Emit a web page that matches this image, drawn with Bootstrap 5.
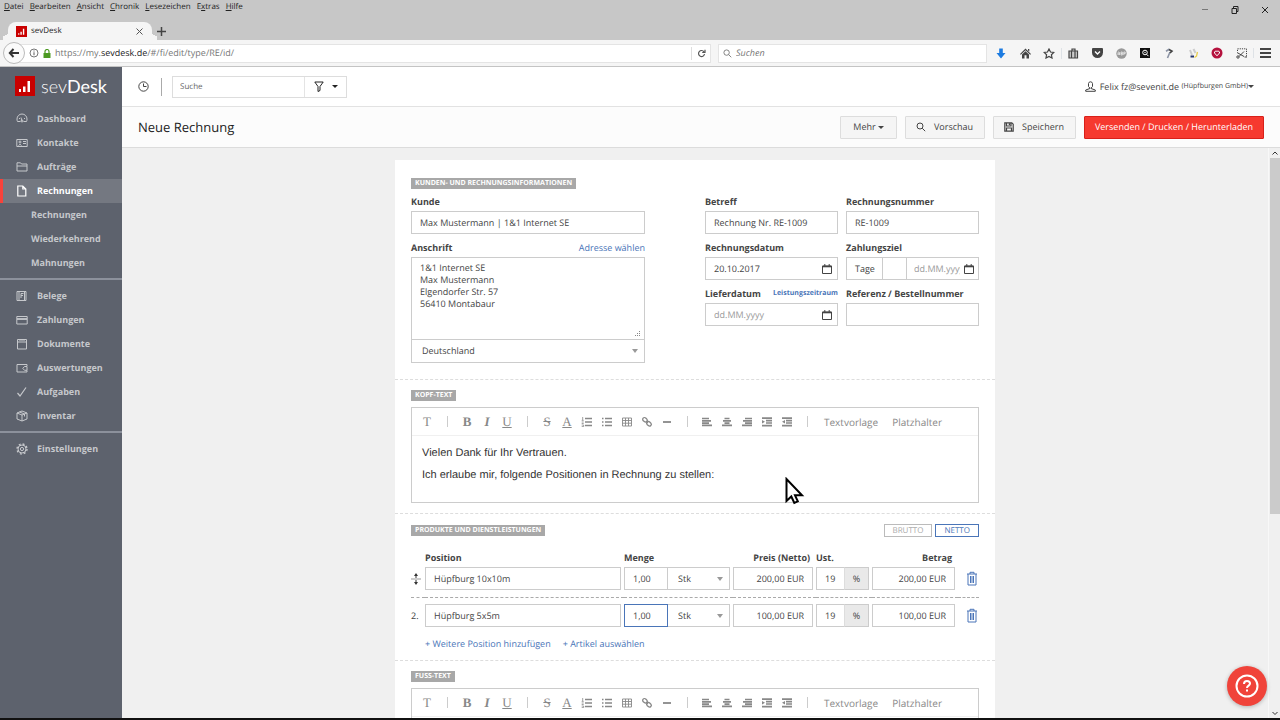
<!DOCTYPE html>
<html lang="de">
<head>
<meta charset="utf-8">
<meta name="viewport" content="width=device-width, initial-scale=1">
<title>sevDesk</title>
<link rel="stylesheet" href="https://cdn.jsdelivr.net/npm/bootstrap@5.3.0/dist/css/bootstrap.min.css">
<style>
  body { font-family: "Open Sans", sans-serif; font-size: 9px; line-height: 12px; color: #444; background: #c7c7c7; text-rendering: geometricPrecision; }
  svg { display: block; flex: none; fill: none; stroke: currentColor; }
  button, input, select, textarea { font: inherit; color: inherit; text-rendering: inherit; }
  a { text-decoration: none; color: #4a75b8; }
  .plain { border: 0; background: none; padding: 0; }

  /* browser window */
  .menubar { height: 14px; gap: 6px; padding-left: 4px; color: #222; font-size: 8px; }
  .menubar a { color: inherit; }
  .menubar u { text-underline-offset: 1px; }
  .wincontrols { gap: 22px; padding-right: 11px; color: #222; }
  .tabrow { height: 26px; padding: 8px 0 0 8px; }
  .tabshape { width: 144px; height: 18px; background: #f5f5f5; border-radius: 8px 8px 0 0; padding: 0 9px 0 8px; color: #222; font-size: 8px; }
  .tabshape::before, .tabshape::after { content: ""; position: absolute; bottom: 0; width: 6px; height: 10px; background: radial-gradient(circle at 0 0, transparent 6px, #f5f5f5 6px); }
  .tabshape::before { left: -5px; }
  .tabshape::after { right: -5px; transform: scaleX(-1); }
  .navrow { height: 27px; background: #f5f5f5; border-bottom: 1px solid #c4c4c4; padding: 0 3px; }
  .backbtn { width: 22px; height: 22px; border: 1px solid #bbb; border-radius: 50%; background: #fafafa; color: #333; z-index: 1; }
  .addressbar { height: 19px; background: #fff; border: 1px solid #e4e4e4; margin-left: -8px; padding-left: 11px; color: #777; }
  .addressbar b { font-weight: 400; color: #222; }
  .reload { width: 19px; height: 13px; border-left: 1px solid #ddd; color: #555; }
  .findbar { width: 269px; height: 19px; background: #fff; border: 1px solid #e4e4e4; margin-left: 7px; padding-left: 4px; color: #777; }
  .findbar input::placeholder { font-style: italic; color: #777; }
  .addons { margin-left: 2px; color: #444; }
  .addons button { width: 24px; }

  /* application */
  .app { background: #f0f0f0; border-bottom: 2px solid #111; min-height: 0; }
  .side { width: 122px; flex: none; background: #5d626d; color: #c6c8cc; font-weight: 700; }
  .logo { height: 40px; padding: 0 0 2px 15px; gap: 6px; color: #fff; font-family: Lato, sans-serif; font-size: 18px; line-height: 18px; font-weight: 300; }
  .logo b { font-weight: 400; }
  .side a { color: inherit; height: 24px; gap: 9px; padding-left: 16px; }
  .side .sub { padding-left: 31px; }
  .side .current { background: #747881; color: #fff; border-left: 3px solid #f8423a; padding-left: 13px; }
  .side hr { margin: 3px 0 4px; border: 0; border-top: 2px solid #8c919c; opacity: 1; }
  .topbar { height: 40px; flex: none; background: #fff; border-bottom: 1px solid #e2e2e2; padding: 0 26px 0 16px; }
  .split { width: 1px; height: 18px; background: #aaa; margin: 0 10px 0 12px; }
  .searchbox { height: 22px; border: 1px solid #ddd; }
  .searchbox input { width: 132px; padding-left: 7px; border-right: 1px solid #e4e4e4; outline: 0; font-size: 8px; }
  .searchbox input::placeholder { color: #666; }
  .searchbox button { width: 41px; color: #222; }
  .company { font-size: 7px; }
  .caret { width: 0; height: 0; border: 3px solid transparent; border-top-color: currentColor; border-bottom: 0; }
  .titlebar { height: 41px; flex: none; background: #fcfcfc; border-bottom: 1px solid #dcdcdc; padding: 0 16px; gap: 8px; }
  .titlebar h1 { font-size: 13px; line-height: 18px; font-weight: 400; color: #222; }
  .act { height: 23px; border: 1px solid #ddd; border-radius: 1px; background: #f5f5f5; padding: 0 11px 0 10px; }
  .act.more-menu { padding: 0 12px; }
  .act.send { background: #f6392f; border-color: #d8201a; color: #fff; padding: 0 10px; }
  .desk { min-height: 0; padding-top: 12px; }
  .rail { width: 12px; flex: none; color: #333; border-left: 1px solid #f8f8f8; }
  .thumb { width: 10px; height: 356px; background: #cbcbcb; }
  .help { right: 13px; bottom: 12px; width: 40px; height: 40px; border-radius: 50%; background: #f0433a; color: #fff; box-shadow: 0 1px 4px #0004; }

  /* invoice form */
  .paper { width: 600px; background: #fff; padding-top: 17px; }
  .block { padding: 0 16px 10px; border-bottom: 1px dashed #ddd; margin-bottom: 10px; }
  .block.customer { padding-bottom: 16px; }
  .tag { width: fit-content; background: #a8a8a8; color: #fff; font-size: 7px; line-height: 11px; font-weight: 700; padding: 0 4px; margin: 1px 0 6px; }
  .fields { display: grid; grid-template-columns: 234px 274px; justify-content: space-between; }
  .pair { display: grid; grid-template-columns: 133px 133px; gap: 8px; }
  label, th { font-weight: 700; color: #444; }
  .cap { height: 14px; margin-bottom: 2px; align-items: center; }
  .second { margin-top: 7px; }
  .box { height: 23px; border: 1px solid #ccc; border-radius: 0; background: #fff; padding: 0 8px; display: flex; align-items: center; width: 100%; min-width: 0; outline: 0; }
  .box input { min-width: 0; flex: 1; outline: 0; }
  .box.dated { padding-right: 5px; }
  .box.picker { padding: 0 6px 0 10px; }
  .picker::after { content: ""; border: 3px solid transparent; border-top: 4px solid #999; border-bottom: 0; flex: none; }
  .pick { appearance: none; width: 100%; height: 100%; border: 0; background: none; outline: 0; }
  input::placeholder { color: #999; opacity: 1; }
  .addr { height: 83px; border: 1px solid #ccc; padding: 4px 8px; line-height: 12px; width: 100%; display: block; outline: 0; color: #444; resize: none; overflow: hidden; }
  .period { font-size: 7px; }
  .term { flex: none; width: 35px; padding-left: 8px; }
  .box input.days { flex: none; width: 25px; border-left: 1px solid #ccc; border-right: 1px solid #ccc; }
  .due { padding-left: 7px; }
  .editor { border: 1px solid #ccc; }
  .tools { height: 28px; padding-left: 5px; border-bottom: 1px solid #f0f0f0; color: #888; font-size: 10px; }
  .tools button { width: 20px; height: 20px; }
  .tools i.bar { width: 20px; height: 11px; background: linear-gradient(#ccc, #ccc) center / 1px 100% no-repeat; }
  .tools button.word { width: auto; margin: 0 7px; }
  .glyph { font-family: "Liberation Serif", serif; font-size: 13px; font-weight: 700; line-height: 14px; }
  .copy { font-family: "Liberation Sans", sans-serif; font-size: 11px; line-height: 14px; color: #333; padding: 10px 10px 0; height: 66px; }
  .copy p { margin-bottom: 8px; }
  .pointer { left: 373px; top: 69px; }
  .vats { gap: 3px; }
  .vat { height: 13px; border: 1px solid #bbb; color: #aaa; font-size: 8px; line-height: 11px; padding: 0 8px; background: #fff; }
  .vat.on { border-color: #4a75b8; color: #4a75b8; }
  .lines { table-layout: fixed; width: 100%; border-collapse: collapse; margin-top: 10px; }
  .lines th { padding: 0 3px 3px 0; }
  .lines th.text-end { padding-right: 6px; }
  .lines td { padding: 0 3px 7px 0; }
  .lines td:last-child { padding-right: 1px; }
  .lines tr.next td { padding-top: 6px; }
  .lines tr.next { border-top: 1px dashed #aaa; }
  .lines .qty { width: 44px; flex: none; }
  .lines .active-box { border-color: #4a75b8; }
  .pct { width: 25px; height: 23px; background: #e9e9e9; border: 1px solid #ccc; border-left-color: #ddd; display: grid; place-items: center; flex: none; margin-left: -1px; }
  .bin { color: #4a75b8; }
  .more { margin: 4px 0 0 14px; gap: 12px; }
</style>
<script src="https://cdn.jsdelivr.net/npm/bootstrap@5.3.0/dist/js/bootstrap.bundle.min.js"></script>
</head>
<body class="vh-100 overflow-hidden d-flex flex-column">

<svg width="0" height="0" class="position-absolute">
  <symbol id="brand" viewBox="0 0 20 20"><path fill="#c90000" stroke="none" d="M0 0h20v20H0z"/><path fill="#fff" stroke="none" d="M4 13h2v3H4zM8 10.500h2.500V16H8zM12.500 5H15v11h-2.500z"/></symbol>
  <symbol id="lens" viewBox="0 0 10 10"><circle cx="4" cy="4" r="3"/><path d="M6.200 6.200 9.200 9.200"/></symbol>
  <symbol id="cal" viewBox="0 0 10 10"><path d="M.5 2h9v7.500h-9z"/><path stroke-width="1.600" d="M.5 2.500h9"/><path d="M2.800 0v2M7.200 0v2"/></symbol>
  <symbol id="bin" viewBox="0 0 12 14"><path d="M1 2.500h10M4 2.500V.8h4v1.700M2 2.500v11h8v-11M4.500 4.500v7M6 4.500v7M7.500 4.500v7"/></symbol>
  <symbol id="ol" viewBox="0 0 12 10"><path stroke-width="1.500" d="M4 1.500h7M4 5h7M4 8.500h7"/><path stroke-width=".8" d="M1.700 0v3M.7 3.400h2M.7 5h2M.7 6.500h2M.7 8h2v1.600h-2"/></symbol>
  <symbol id="ul" viewBox="0 0 12 10"><path stroke-width="1.500" d="M4 1.500h7M4 5h7M4 8.500h7M1 1.500h1.500M1 5h1.500M1 8.500h1.500"/></symbol>
  <symbol id="grid" viewBox="0 0 12 10"><path stroke-width=".9" d="M1.500 1h9v8h-9zM1.500 3.500h9M1.500 6.200h9M4.500 1v8M7.500 1v8"/></symbol>
  <symbol id="chain" viewBox="0 0 12 12"><g stroke-width="1.300"><rect x="1.500" y="2" width="5" height="3.600" rx="1.800" transform="rotate(42 4 3.800)"/><rect x="5.500" y="6" width="5" height="3.600" rx="1.800" transform="rotate(42 8 7.800)"/><path d="m5 5 2 2"/></g></symbol>
  <symbol id="dash" viewBox="0 0 10 4"><path stroke-width="1.800" d="M1 2h8"/></symbol>
  <symbol id="al" viewBox="0 0 12 10"><path stroke-width="1.700" d="M1 1.500h7M1 3.800h9M1 6.100h7M1 8.400h10"/></symbol>
  <symbol id="ac" viewBox="0 0 12 10"><path stroke-width="1.700" d="M3.500 1.500h5M2 3.800h8M3.500 6.100h5M1 8.400h10"/></symbol>
  <symbol id="ar" viewBox="0 0 12 10"><path stroke-width="1.700" d="M4 1.500h7M2 3.800h9M4 6.100h7M1 8.400h10"/></symbol>
  <symbol id="in" viewBox="0 0 12 10"><path stroke-width="1.700" d="M1 1.200h10M5 3.600h6M5 6h6M1 8.600h10"/><path fill="currentColor" stroke="none" d="m1 3 3 1.800-3 1.800z"/></symbol>
  <symbol id="out" viewBox="0 0 12 10"><path stroke-width="1.700" d="M1 1.200h10M5 3.600h6M5 6h6M1 8.600h10"/><path fill="currentColor" stroke="none" d="M4 3 1 4.800l3 1.800z"/></symbol>
</svg>

<header>
  <div class="d-flex justify-content-between">
    <nav class="menubar d-flex align-items-center">
      <a href="#"><u>D</u>atei</a><a href="#"><u>B</u>earbeiten</a><a href="#"><u>A</u>nsicht</a><a href="#"><u>C</u>hronik</a><a href="#"><u>L</u>esezeichen</a><a href="#">E<u>x</u>tras</a><a href="#"><u>H</u>ilfe</a>
    </nav>
    <div class="wincontrols d-flex align-items-end">
      <button class="plain" aria-label="Minimieren"><svg width="8" height="8"><path d="M1 3.500h6" stroke="#777"/></svg></button>
      <button class="plain" aria-label="Verkleinern"><svg width="8" height="8"><path d="M1 2.500h4.500v5H1zM2.500 2.500v-2H7v5H5.500"/></svg></button>
      <button class="plain" aria-label="Schließen"><svg width="8" height="8"><path d="m1 1 6 6M7 1 1 7"/></svg></button>
    </div>
  </div>
  <div class="tabrow d-flex align-items-center">
    <div class="tabshape position-relative d-flex align-items-center gap-1">
      <svg width="11" height="11"><use href="#brand"/></svg><span class="flex-grow-1">sevDesk</span>
      <button class="plain" aria-label="Tab schließen"><svg width="7" height="7"><path stroke="#555" d="m.5.5 6 6M6.500.5l-6 6"/></svg></button>
    </div>
    <button class="plain ms-1" aria-label="Neuer Tab"><svg width="11" height="11"><path stroke-width="1.500" d="M5.500 1v9M1 5.500h9"/></svg></button>
  </div>
  <div class="navrow d-flex align-items-center">
    <button class="backbtn p-0 d-flex align-items-center justify-content-center" aria-label="Zurück"><svg width="12" height="10"><path stroke-width="2" d="M11 5H2M5.500 1 1.800 5l3.700 4"/></svg></button>
    <div class="addressbar d-flex align-items-center flex-grow-1">
      <svg width="10" height="10" class="me-1"><circle cx="5" cy="5" r="4"/><path stroke-width="1.200" d="M5 4.200v3M5 2.400v1"/></svg>
      <svg width="8" height="9" class="me-1"><path fill="#4c9a22" stroke="none" d="M.5 4h7v5h-7z"/><path stroke="#4c9a22" stroke-width="1.200" d="M2 4V2.500a2 2 0 0 1 4 0V4"/></svg>
      <span class="flex-grow-1">https://my.<b>sevdesk.de</b>/#/fi/edit/type/RE/id/</span>
      <button class="plain reload d-flex align-items-center justify-content-center" aria-label="Neu laden"><svg width="9" height="9"><path stroke-width="1.200" d="M7 2.800A3 3 0 1 0 7.500 5M8 .8v2.700H5.200"/></svg></button>
    </div>
    <div class="findbar d-flex align-items-center gap-1">
      <svg width="9" height="9"><use href="#lens"/></svg><input class="plain flex-grow-1" type="text" placeholder="Suchen" aria-label="Suchen">
    </div>
    <div class="addons d-flex align-items-center flex-shrink-0">
      <button class="plain" aria-label="Downloads"><svg class="m-auto" width="10" height="11"><path fill="#1c7be0" stroke="none" d="M3.200.5h3.600V5H9.500L5 10.500.5 5h2.700z"/></svg></button>
      <button class="plain" aria-label="Startseite"><svg class="m-auto" width="11" height="11"><path fill="currentColor" stroke="none" d="M5.500.5 11 6l-.8.8-4.700-4.500L.8 6.800 0 6zM2 6.500l3.500-3.300L9 6.500v4H6.500V7.200h-2v3.300H2zM8 1h1.300v2.500L8 2.500z"/></svg></button>
      <button class="plain" aria-label="Lesezeichen"><svg class="m-auto" width="12" height="11"><path stroke-width="1.200" d="m6 1 1.500 3 3.300.4-2.400 2.300.6 3.300-3-1.600-3 1.600.6-3.300L1.200 4.400 4.500 4z"/></svg></button>
      <button class="plain border-start" aria-label="Leseliste"><svg class="m-auto" width="11" height="11"><path fill="#ccc" stroke-width="1.200" d="M1 3h8.500v7H1zM3.500 3v7M7 3v7M4 2.500V1h3v1.500"/></svg></button>
      <button class="plain" aria-label="Pocket"><svg class="m-auto" width="11" height="10"><path fill="currentColor" stroke="none" d="M1 0h9q1 0 1 1v3.500a5.500 5.500 0 0 1-11 0V1q0-1 1-1z"/><path stroke="#fff" stroke-width="1.400" d="m3 3.500 2.500 2.500L8 3.500"/></svg></button>
      <button class="plain" aria-label="Werbeblocker"><svg class="m-auto" width="11" height="11"><circle cx="5.500" cy="5.500" r="5.200" fill="#999" stroke="none"/><path stroke="#eee" stroke-width=".8" d="M2 7V4.500q.8-1 1.500 0V7M2 6h1.500M5 4v3h1.300V4zM5 5.500h1.300M7.800 7V4h1.400v1.600H7.800"/></svg></button>
      <button class="plain" aria-label="Bildsuche"><svg class="m-auto" width="10" height="10"><path fill="#111" stroke="none" d="M0 0h10v10H0z"/><circle cx="5" cy="4.500" r="2.300" stroke="#fff"/><circle cx="5" cy="4.500" r=".7" fill="#fff" stroke="none"/><path stroke="#fff" d="m6.500 6.200 2 2"/></svg></button>
      <button class="plain" aria-label="Pipette"><svg class="m-auto" width="10" height="11"><path stroke="#8b93a5" stroke-width="1.600" d="M6 4 3.500 10M2 3.200 5.500 1"/><path stroke="#444" stroke-width="1.600" d="M5 1.500 8 3.200 6 5"/></svg></button>
      <button class="plain" aria-label="Farben"><svg class="m-auto" width="11" height="11"><path stroke="#ccc" stroke-width="2" d="m2 2 2 5M5.500 1l2 4"/><path stroke="#26356f" stroke-width="2" d="M2.500 8.500h3.500"/><path stroke="#e9cf4f" stroke-width="1.300" d="m9.500 4-1 4-2 1.500"/></svg></button>
      <button class="plain" aria-label="Merken"><svg class="m-auto" width="12" height="12"><circle cx="6" cy="6" r="5.500" fill="#b5123e" stroke="none"/><path stroke="#fff" d="M6 8.800 3.500 6a1.500 1.500 0 0 1 2.500-1.500A1.500 1.500 0 0 1 8.500 6z"/></svg></button>
      <button class="plain" aria-label="Ausschneiden"><svg class="m-auto" width="11" height="11"><path stroke-dasharray="1.200 1" d="M1.500 3V.8h9V9"/><path d="M8 3.500 3 8.500M1 4.500l7 4"/><circle cx="2" cy="9" r="1.200"/><path d="M8.500 9H11"/></svg></button>
      <button class="plain border-start" aria-label="Menü"><svg class="m-auto" width="11" height="10"><path stroke-width="2" d="M0 1h11M0 5h11M0 9h11"/></svg></button>
    </div>
  </div>
</header>

<div class="app d-flex flex-grow-1 position-relative">
  <nav class="side d-flex flex-column">
    <div class="logo d-flex align-items-center"><svg width="20" height="20"><use href="#brand"/></svg><span>sev<b>Desk</b></span></div>
    <a class="d-flex align-items-center" href="#"><svg width="12" height="12"><path d="M1.500 8.500A4.500 4.500 0 0 1 1 6a5 5 0 0 1 10 0 4.500 4.500 0 0 1-.5 2.500H7.500M1.500 8.500h3M6 8 5 4.500M3 5.500h1M8 5.500h1"/><circle cx="6" cy="8" r="1"/></svg>Dashboard</a>
    <a class="d-flex align-items-center" href="#"><svg width="12" height="12"><path d="M.8 2.500h10.400v7H.8zM2.500 8.500q1.500-2.500 3 0M7 4.500h3M7 6.500h3"/><circle cx="4" cy="5" r="1"/></svg>Kontakte</a>
    <a class="d-flex align-items-center" href="#"><svg width="12" height="12"><path d="M1 10V1.800h3.500L5.500 3H11v7zM1 5h10"/></svg>Aufträge</a>
    <a class="current d-flex align-items-center" href="#"><svg width="12" height="12"><path stroke-width="1.200" d="M1.800 1h5l3 3v7h-8zM6.800 1v3h3"/></svg>Rechnungen</a>
    <a class="sub d-flex align-items-center" href="#">Rechnungen</a>
    <a class="sub d-flex align-items-center" href="#">Wiederkehrend</a>
    <a class="sub d-flex align-items-center" href="#">Mahnungen</a>
    <hr>
    <a class="d-flex align-items-center" href="#"><svg width="12" height="12"><path d="M1 1.500h9v9h-9zM3 1.500v9M8.500 1.500v9M5 8V3.500h2.500M5 5.500h2"/></svg>Belege</a>
    <a class="d-flex align-items-center" href="#"><svg width="12" height="12"><path d="M.8 2.500h10.400v7.500H.8z"/><path stroke-width="1.800" d="M1 5h10"/></svg>Zahlungen</a>
    <a class="d-flex align-items-center" href="#"><svg width="12" height="12"><path d="M1.500 1.500h9v9.500h-9zM1.500 4h9M4 1v2M6 1v2M8 1v2"/></svg>Dokumente</a>
    <a class="d-flex align-items-center" href="#"><svg width="12" height="12"><path d="M11 4V2.500H1V10h10V8.500M11 4.500v3.800H8.500L6.800 6.400l1.700-1.900z"/></svg>Auswertungen</a>
    <a class="d-flex align-items-center" href="#"><svg width="12" height="12"><path stroke-width="1.200" d="m1.500 7 2.500 3 6-8.500"/></svg>Aufgaben</a>
    <a class="d-flex align-items-center" href="#"><svg width="12" height="12"><path d="M6 1 11 3v6L6 11 1 9V3zM1 3l5 2 5-2M6 5v6M3.500 2l5 2v2.500"/></svg>Inventar</a>
    <hr>
    <a class="d-flex align-items-center" href="#"><svg width="12" height="12"><circle cx="6" cy="6" r="4"/><circle cx="6" cy="6" r="1.600"/><circle cx="6" cy="6" r="5" stroke-width="1.400" stroke-dasharray="1.960 1.967"/></svg>Einstellungen</a>
  </nav>

  <div class="d-flex flex-column flex-grow-1">
    <div class="topbar d-flex align-items-center">
      <button class="plain" aria-label="Verlauf"><svg width="11" height="11"><circle cx="5.500" cy="5.500" r="4.700"/><path d="M5.500 2.500v3h3"/></svg></button>
      <span class="split"></span>
      <div class="searchbox d-flex">
        <input class="border-top-0 border-bottom-0 border-start-0 bg-transparent" type="text" placeholder="Suche" aria-label="Suche">
        <button class="plain d-flex align-items-center justify-content-center gap-2" aria-label="Filter"><svg width="10" height="11"><path d="M.8 1h8.400L6 5.500v4l-2 1v-5z"/></svg><span class="caret"></span></button>
      </div>
      <button class="plain ms-auto d-flex align-items-center"><svg width="11" height="11" class="me-1"><path d="M3.500 5.500v-3q.3-1.700 2-1.700t2 1.700v3q-.5 1-1.500 1.300v.7l4.300 1.500v1.300H.7V9L5 7.500v-.7q-1-.3-1.500-1.300z"/></svg><span>Felix fz@sevenit.de</span>&nbsp;<span class="company">(Hüpfburgen GmbH)</span><span class="caret"></span></button>
    </div>
    <div class="titlebar d-flex align-items-center">
      <h1 class="m-0 me-auto">Neue Rechnung</h1>
      <button class="act more-menu d-flex align-items-center">Mehr&nbsp;<span class="caret"></span></button>
      <button class="act d-flex align-items-center gap-2"><svg width="10" height="10"><use href="#lens"/></svg>Vorschau</button>
      <button class="act d-flex align-items-center gap-2"><svg width="10" height="10"><path stroke-width="1.200" d="M.8.8h7l1.400 1.400v7H.8zM2.500 1v3h4.500V1M2.500 9V6h5v3"/><path stroke-width="1.500" d="M5.500 1.200v2"/></svg>Speichern</button>
      <button class="act send">Versenden / Drucken / Herunterladen</button>
    </div>

    <div class="d-flex flex-grow-1 overflow-hidden">
      <main class="desk flex-grow-1 overflow-hidden">
        <form class="paper mx-auto">
          <section class="block customer">
            <h2 class="tag">KUNDEN- UND RECHNUNGSINFORMATIONEN</h2>
            <div class="fields">
              <div>
                <div class="cap d-flex"><label for="kunde">Kunde</label></div>
                <input class="box" id="kunde" type="text" value="Max Mustermann | 1&amp;1 Internet SE">
                <div class="cap second d-flex justify-content-between"><label for="anschrift">Anschrift</label><a href="#">Adresse wählen</a></div>
                <div class="position-relative">
                  <textarea class="addr" id="anschrift">1&amp;1 Internet SE
Max Mustermann
Elgendorfer Str. 57
56410 Montabaur</textarea>
                  <svg class="position-absolute bottom-0 end-0 m-1" width="6" height="6"><path stroke="#888" stroke-dasharray="1 1" d="M0 5.500h6M2 3.500h4M4 1.500h2"/></svg>
                </div>
                <div class="box picker border-top-0"><select class="pick" aria-label="Land"><option>Deutschland</option></select></div>
              </div>
              <div class="pair">
                <div>
                  <div class="cap d-flex"><label for="betreff">Betreff</label></div>
                  <input class="box" id="betreff" type="text" value="Rechnung Nr. RE-1009">
                  <div class="cap second d-flex"><label for="datum">Rechnungsdatum</label></div>
                  <div class="box dated"><input class="plain" id="datum" type="text" value="20.10.2017"><svg width="10" height="10"><use href="#cal"/></svg></div>
                  <div class="cap second d-flex justify-content-between"><label for="lieferung">Lieferdatum</label><a class="fw-bold period" href="#">Leistungszeitraum</a></div>
                  <div class="box dated"><input class="plain" id="lieferung" type="text" placeholder="dd.MM.yyyy"><svg width="10" height="10"><use href="#cal"/></svg></div>
                </div>
                <div>
                  <div class="cap d-flex"><label for="nummer">Rechnungsnummer</label></div>
                  <input class="box" id="nummer" type="text" value="RE-1009">
                  <div class="cap second d-flex"><label for="tage">Zahlungsziel</label></div>
                  <div class="box p-0">
                    <span class="term">Tage</span><input class="plain h-100 days" id="tage" type="text">
                    <input class="plain due me-1" type="text" placeholder="dd.MM.yyyy" aria-label="Fällig am"><svg class="me-1" width="10" height="10"><use href="#cal"/></svg>
                  </div>
                  <div class="cap second d-flex"><label for="referenz">Referenz / Bestellnummer</label></div>
                  <input class="box" id="referenz" type="text">
                </div>
              </div>
            </div>
          </section>

          <section class="block">
            <h2 class="tag">KOPF-TEXT</h2>
            <div class="editor position-relative">
              <div class="tools d-flex align-items-center">
                <button type="button" class="plain glyph fw-normal">T</button><i class="bar"></i>
                <button type="button" class="plain glyph">B</button><button type="button" class="plain glyph fst-italic">I</button><button type="button" class="plain glyph fw-normal text-decoration-underline">U</button><i class="bar"></i>
                <button type="button" class="plain glyph fw-normal text-decoration-line-through">S</button><button type="button" class="plain glyph fw-normal text-decoration-underline">A</button>
                <button type="button" class="plain" aria-label="Nummerierung"><svg class="m-auto" width="12" height="10"><use href="#ol"/></svg></button>
                <button type="button" class="plain" aria-label="Aufzählung"><svg class="m-auto" width="12" height="10"><use href="#ul"/></svg></button>
                <button type="button" class="plain" aria-label="Tabelle"><svg class="m-auto" width="12" height="10"><use href="#grid"/></svg></button>
                <button type="button" class="plain" aria-label="Link"><svg class="m-auto" width="12" height="12"><use href="#chain"/></svg></button>
                <button type="button" class="plain" aria-label="Trennlinie"><svg class="m-auto" width="10" height="4"><use href="#dash"/></svg></button><i class="bar"></i>
                <button type="button" class="plain" aria-label="Links"><svg class="m-auto" width="12" height="10"><use href="#al"/></svg></button>
                <button type="button" class="plain" aria-label="Zentriert"><svg class="m-auto" width="12" height="10"><use href="#ac"/></svg></button>
                <button type="button" class="plain" aria-label="Rechts"><svg class="m-auto" width="12" height="10"><use href="#ar"/></svg></button>
                <button type="button" class="plain" aria-label="Einzug"><svg class="m-auto" width="12" height="10"><use href="#in"/></svg></button>
                <button type="button" class="plain" aria-label="Ausrücken"><svg class="m-auto" width="12" height="10"><use href="#out"/></svg></button><i class="bar"></i>
                <button type="button" class="plain word">Textvorlage</button><button type="button" class="plain word">Platzhalter</button>
              </div>
              <div class="copy"><p>Vielen Dank für Ihr Vertrauen.</p><p>Ich erlaube mir, folgende Positionen in Rechnung zu stellen:</p></div>
              <svg class="pointer position-absolute" width="20" height="28"><path fill="#fff" stroke="#000" stroke-width="2" d="M1.500 2v22l4.800-4.500 3 6.500 3.500-1.700-2.800-6h7z"/></svg>
            </div>
          </section>

          <section class="block">
            <div class="d-flex justify-content-between">
              <h2 class="tag">PRODUKTE UND DIENSTLEISTUNGEN</h2>
              <div class="d-flex vats"><button type="button" class="vat">BRUTTO</button><button type="button" class="vat on">NETTO</button></div>
            </div>
            <table class="lines">
              <colgroup><col style="width:14px"><col><col style="width:109px"><col style="width:83px"><col style="width:56px"><col style="width:86px"><col style="width:21px"></colgroup>
              <thead><tr><th></th><th>Position</th><th>Menge</th><th class="text-end">Preis (Netto)</th><th>Ust.</th><th class="text-end">Betrag</th><th></th></tr></thead>
              <tbody>
                <tr>
                  <td><svg width="10" height="12"><path stroke="#999" d="M0 6h10"/><path fill="#333" stroke="none" d="M5 0l2 3H5.500v2h-1V3H3zM5 12l2-3H5.500V7h-1v2H3z"/></svg></td>
                  <td><input class="box" type="text" value="Hüpfburg 10x10m" aria-label="Position 1"></td>
                  <td><div class="d-flex"><input class="box qty" type="text" value="1,00" aria-label="Menge 1"><div class="box picker border-start-0"><select class="pick" aria-label="Einheit 1"><option>Stk</option></select></div></div></td>
                  <td><input class="box text-end" type="text" value="200,00 EUR" aria-label="Preis 1"></td>
                  <td><div class="d-flex"><input class="box" type="text" value="19" aria-label="Steuersatz 1"><span class="pct">%</span></div></td>
                  <td><input class="box text-end" type="text" value="200,00 EUR" aria-label="Betrag 1"></td>
                  <td><button type="button" class="plain bin ms-auto d-block" aria-label="Position 1 löschen"><svg width="12" height="15"><use href="#bin"/></svg></button></td>
                </tr>
                <tr class="next">
                  <td>2.</td>
                  <td><input class="box" type="text" value="Hüpfburg 5x5m" aria-label="Position 2"></td>
                  <td><div class="d-flex"><input class="box qty active-box" type="text" value="1,00" aria-label="Menge 2"><div class="box picker border-start-0"><select class="pick" aria-label="Einheit 2"><option>Stk</option></select></div></div></td>
                  <td><input class="box text-end" type="text" value="100,00 EUR" aria-label="Preis 2"></td>
                  <td><div class="d-flex"><input class="box" type="text" value="19" aria-label="Steuersatz 2"><span class="pct">%</span></div></td>
                  <td><input class="box text-end" type="text" value="100,00 EUR" aria-label="Betrag 2"></td>
                  <td><button type="button" class="plain bin ms-auto d-block" aria-label="Position 2 löschen"><svg width="12" height="15"><use href="#bin"/></svg></button></td>
                </tr>
              </tbody>
            </table>
            <div class="d-flex more"><a href="#">+ Weitere Position hinzufügen</a><a href="#">+ Artikel auswählen</a></div>
          </section>

          <section class="block">
            <h2 class="tag">FUSS-TEXT</h2>
            <div class="editor">
              <div class="tools d-flex align-items-center">
                <button type="button" class="plain glyph fw-normal">T</button><i class="bar"></i>
                <button type="button" class="plain glyph">B</button><button type="button" class="plain glyph fst-italic">I</button><button type="button" class="plain glyph fw-normal text-decoration-underline">U</button><i class="bar"></i>
                <button type="button" class="plain glyph fw-normal text-decoration-line-through">S</button><button type="button" class="plain glyph fw-normal text-decoration-underline">A</button>
                <button type="button" class="plain" aria-label="Nummerierung"><svg class="m-auto" width="12" height="10"><use href="#ol"/></svg></button>
                <button type="button" class="plain" aria-label="Aufzählung"><svg class="m-auto" width="12" height="10"><use href="#ul"/></svg></button>
                <button type="button" class="plain" aria-label="Tabelle"><svg class="m-auto" width="12" height="10"><use href="#grid"/></svg></button>
                <button type="button" class="plain" aria-label="Link"><svg class="m-auto" width="12" height="12"><use href="#chain"/></svg></button>
                <button type="button" class="plain" aria-label="Trennlinie"><svg class="m-auto" width="10" height="4"><use href="#dash"/></svg></button><i class="bar"></i>
                <button type="button" class="plain" aria-label="Links"><svg class="m-auto" width="12" height="10"><use href="#al"/></svg></button>
                <button type="button" class="plain" aria-label="Zentriert"><svg class="m-auto" width="12" height="10"><use href="#ac"/></svg></button>
                <button type="button" class="plain" aria-label="Rechts"><svg class="m-auto" width="12" height="10"><use href="#ar"/></svg></button>
                <button type="button" class="plain" aria-label="Einzug"><svg class="m-auto" width="12" height="10"><use href="#in"/></svg></button>
                <button type="button" class="plain" aria-label="Ausrücken"><svg class="m-auto" width="12" height="10"><use href="#out"/></svg></button><i class="bar"></i>
                <button type="button" class="plain word">Textvorlage</button><button type="button" class="plain word">Platzhalter</button>
              </div>
              <div class="copy"></div>
            </div>
          </section>
        </form>
      </main>
      <div class="rail d-flex flex-column align-items-center">
        <svg width="8" height="10"><path d="m1.500 6.500 2.500-2.500 2.500 2.500"/></svg>
        <div class="thumb"></div>
        <svg class="mt-auto" width="8" height="10"><path d="m1.500 4 2.500 2.500L6.500 4"/></svg>
      </div>
    </div>
  </div>
  <button class="help plain position-absolute" aria-label="Hilfe"><svg class="m-auto" width="24" height="24"><circle cx="12" cy="12" r="10.500" stroke-width="2"/><path stroke-width="2" d="M9 10q0-3 3-3t3 2.600c0 2-3 2-3 4.400M12 15.500v2"/></svg></button>
</div>
</body>
</html>
